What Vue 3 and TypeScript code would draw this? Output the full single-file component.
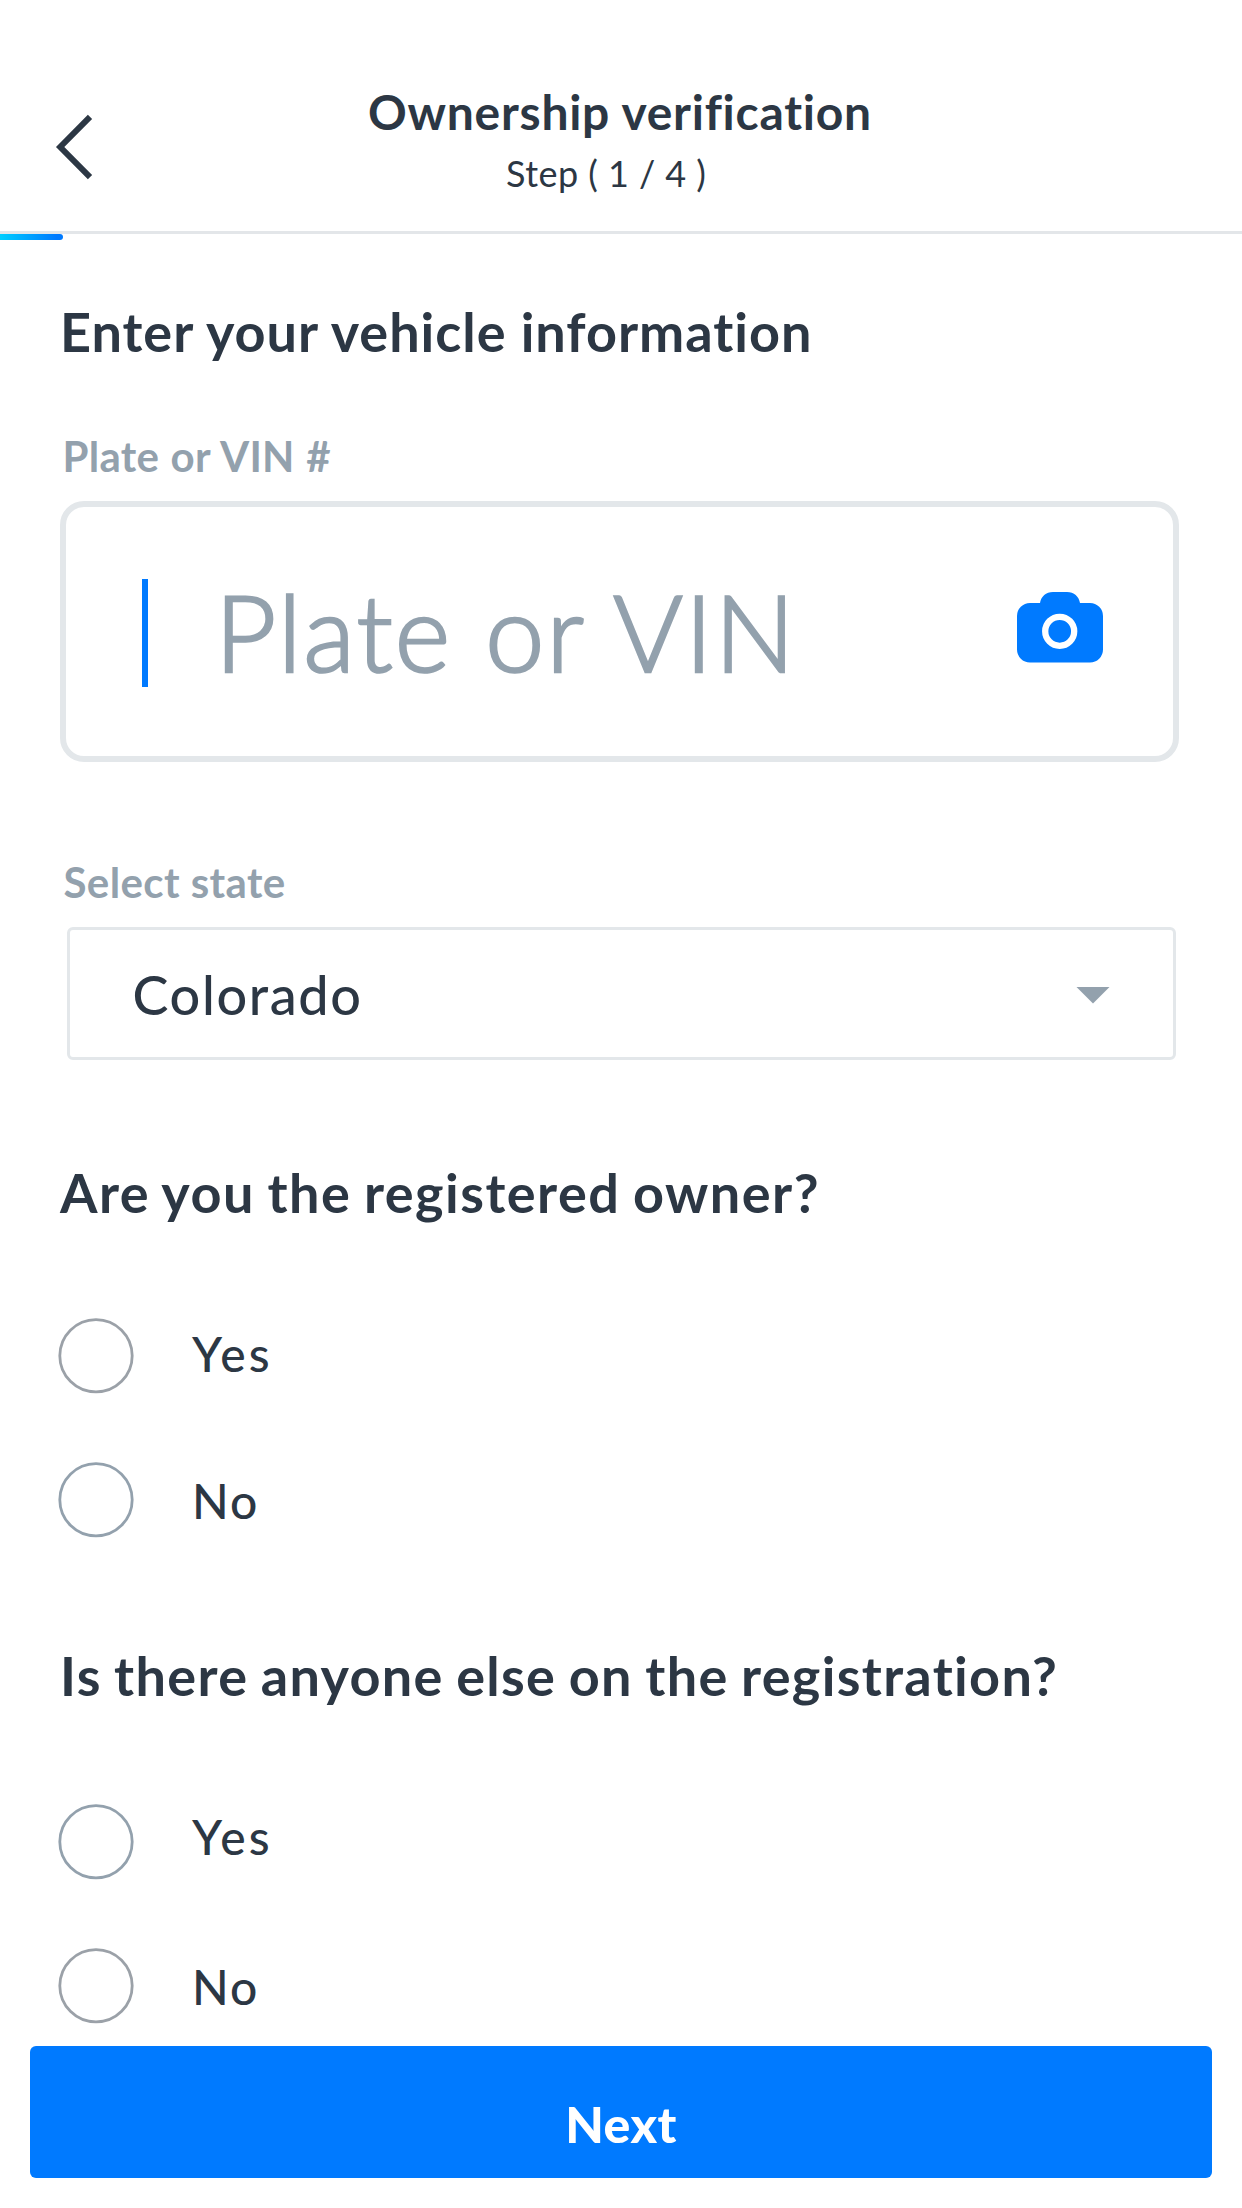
<script setup lang="ts">
import { ref } from 'vue'

interface Option {
  label: string
  tone: 'neutral' | 'slate'
  lift: number
}

interface Question {
  id: string
  title: string
  options: Option[]
}

const questions: Question[] = [
  {
    id: 'owner',
    title: 'Are you the registered owner?',
    options: [
      { label: 'Yes', tone: 'neutral', lift: 6 },
      { label: 'No', tone: 'slate', lift: 0 },
    ],
  },
  {
    id: 'others',
    title: 'Is there anyone else on the registration?',
    options: [
      { label: 'Yes', tone: 'slate', lift: 12 },
      { label: 'No', tone: 'neutral', lift: 0 },
    ],
  },
]

const answers = ref<Record<string, string>>({})
</script>

<template>
  <div class="screen">
    <header class="header">
      <svg class="back" width="40" height="68" viewBox="0 0 40 68" fill="none">
        <path d="M36 3.900L6.200 34L36 64.100" />
      </svg>
      <div class="titles">
        <h1 class="title">Ownership verification</h1>
        <p class="step">Step ( 1 / 4 )</p>
      </div>
    </header>
    <div class="progress"></div>

    <main class="form">
      <h2 class="heading">Enter your vehicle information</h2>

      <div class="label plate-label">Plate or VIN #</div>
      <div class="plate">
        <span class="caret"></span>
        <span class="placeholder">Plate or VIN</span>
        <svg class="camera" width="86" height="71" viewBox="0 0 86 71">
          <path
            fill="#007aff"
            d="M13 11H23C24 4.500 29 0 36 0H50C57 0 62 4.500 63 11H73A13 13 0 0 1 86 24V57.500A13 13 0 0 1 73 70.500H13A13 13 0 0 1 0 57.500V24A13 13 0 0 1 13 11Z"
          />
          <circle cx="42.700" cy="39.300" r="14.500" fill="none" stroke="#fff" stroke-width="6.300" />
        </svg>
      </div>

      <div class="label state-label">Select state</div>
      <div class="select">
        <span class="value">Colorado</span>
        <svg class="arrow" width="34" height="17" viewBox="0 0 34 17">
          <path d="M0.500 0H33.500L17 16.500Z" fill="#93a1ad" />
        </svg>
      </div>

      <section v-for="q in questions" :key="q.id" class="question" :class="q.id">
        <h2 class="heading">{{ q.title }}</h2>
        <div
          v-for="o in q.options"
          :key="o.label"
          class="option"
          @click="answers[q.id] = o.label"
        >
          <svg class="radio" :class="o.tone" width="76" height="76" viewBox="0 0 76 76">
            <circle cx="38" cy="37.750" r="36.200" />
          </svg>
          <span
            class="option-label"
            :class="{ wide: o.label === 'Yes' }"
            :style="{ paddingBottom: o.lift + 'px' }"
          >{{ o.label }}</span>
        </div>
      </section>
    </main>

    <button class="next" type="button">Next</button>
  </div>
</template>

<style>
body {
  margin: 0;
  background: #fff;
}
</style>

<style scoped>
.screen {
  display: flex;
  flex-direction: column;
  width: 1242px;
  height: 2208px;
  overflow: hidden;
  background: #fff;
  color: #2c3744;
  font-family: Lato, "Open Sans", sans-serif;
}
.header {
  display: flex;
  align-items: flex-start;
  box-sizing: border-box;
  height: 234px;
  padding: 80px 0 0 54px;
  border-bottom: 3px solid #e3e6e9;
}
.back {
  margin-top: 33px;
}
.back path {
  stroke: #2c3744;
  stroke-width: 6;
}
.titles {
  margin-left: 274px;
  padding-top: 2px;
}
.title {
  margin: 0;
  font-size: 48px;
  font-weight: 700;
  line-height: 60px;
  letter-spacing: 0.74px;
  white-space: nowrap;
}
.step {
  margin: 9px 0 0 138px;
  font-size: 36px;
  line-height: 44px;
  letter-spacing: 0.45px;
  white-space: nowrap;
}
.progress {
  width: 63px;
  height: 6px;
  border-radius: 0 3px 3px 0;
  background: linear-gradient(90deg, #00cfff, #007aff 90%);
}
.form {
  display: flex;
  flex-direction: column;
  height: 1806px;
  box-sizing: border-box;
  padding: 57px 60px 0;
}
.heading {
  margin: 0;
  font-size: 54px;
  font-weight: 700;
  line-height: 70px;
  letter-spacing: 0.98px;
  white-space: nowrap;
}
.label {
  color: #93a1ad;
  font-size: 42px;
  font-weight: 700;
  line-height: 50px;
  white-space: nowrap;
}
.plate-label {
  margin: 64px 0 20px 2.5px;
  letter-spacing: 0.27px;
  word-spacing: 1px;
}
.plate {
  display: flex;
  align-items: center;
  box-sizing: border-box;
  width: 1119px;
  height: 261px;
  padding: 0 70px 0 76px;
  border: 6px solid #e3e7ea;
  border-radius: 24px;
}
.caret {
  width: 6px;
  height: 108px;
  margin-top: 3px;
  background: #007aff;
}
.placeholder {
  flex: 1;
  margin-left: 67px;
  padding-bottom: 2px;
  color: #93a1ad;
  font-size: 106px;
  font-weight: 300;
  line-height: 130px;
  letter-spacing: 2.2px;
  word-spacing: 2px;
  -webkit-text-stroke: 2.5px #93a1ad;
}
.camera {
  margin-bottom: 9px;
}
.state-label {
  margin: 95px 0 20px 3.5px;
  letter-spacing: 0.4px;
}
.select {
  display: flex;
  align-items: center;
  justify-content: space-between;
  box-sizing: border-box;
  width: 1109px;
  height: 133px;
  margin-left: 6.5px;
  padding: 0 63px 0 63px;
  border: 3px solid #e3e7ea;
  border-radius: 6px;
}
.value {
  padding-top: 2px;
  font-size: 54px;
  font-weight: 500;
  line-height: 70px;
  letter-spacing: 1.6px;
}
.arrow {
  margin-top: 3px;
}
.question {
  display: flex;
  flex-direction: column;
}
.question .option {
  margin-top: 69px;
}
.question .heading + .option {
  margin-top: 90px;
}
.owner {
  margin-top: 98px;
}
.owner .heading {
  letter-spacing: 1.48px;
  word-spacing: -2px;
}
.others {
  margin-top: 104px;
}
.others .heading {
  letter-spacing: 1.32px;
  word-spacing: -2px;
}
.others .heading + .option {
  margin-top: 93px;
}
.option {
  display: flex;
  align-items: center;
  height: 75px;
}
.radio {
  flex: none;
  margin-left: -2px;
  fill: none;
  stroke-width: 2.8px;
}
.neutral {
  stroke: #9ba1a8;
}
.slate {
  stroke: #93a1ad;
}
.option-label {
  margin-left: 58px;
  padding-top: 3px;
  font-size: 48px;
  font-weight: 500;
  line-height: 60px;
  letter-spacing: 2px;
}
.option-label.wide {
  letter-spacing: 3.2px;
}
.next {
  width: 1182px;
  height: 132px;
  margin: 0 0 0 30px;
  padding: 24px 0 0;
  border: 0;
  border-radius: 6px;
  background: #007aff;
  color: #fff;
  font-family: inherit;
  font-size: 50px;
  font-weight: 900;
  line-height: 60px;
  letter-spacing: 0.4px;
}
</style>
